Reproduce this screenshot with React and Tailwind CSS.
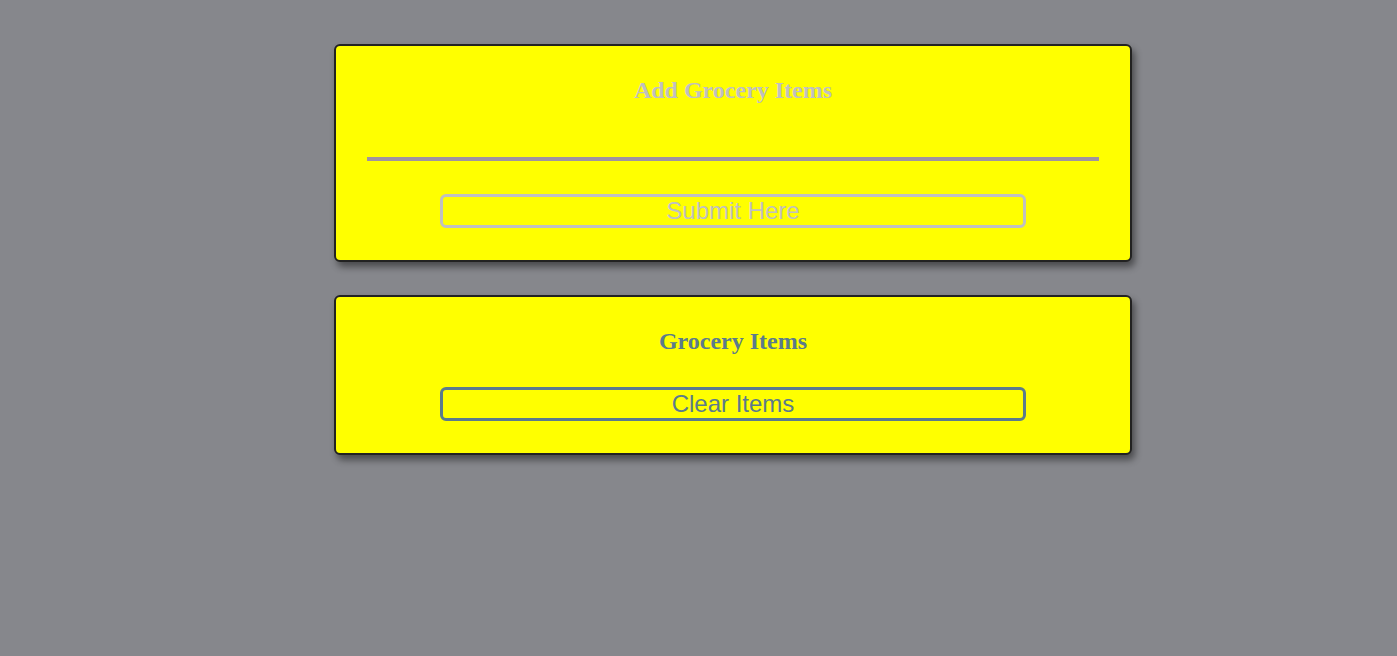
export default function App() {
  return (
    <div className="min-h-[656px] w-full bg-[#86878c] pt-[44px]">
      <div className="ml-[334px] flex w-[798px] flex-col gap-[33px]">
        <div className="flex flex-col items-center rounded-[6px] border-2 border-[#222222] bg-[#ffff00] pt-[30px] pb-[32px] shadow-[3px_5px_7px_rgba(0,0,0,0.45)]">
          <h2 className="h-[28px] text-[24px] font-bold leading-[28px] text-[#c0c0c0] [font-family:'Liberation_Serif',serif]">
            Add Grocery Items
          </h2>
          <input
            type="text"
            className="h-[57px] w-[732px] border-0 border-b-4 border-[#a0939f] bg-transparent outline-none"
          />
          <button className="mt-[33px] h-[34px] w-[586px] rounded-[6px] border-[3px] border-[#c0c0c0] bg-transparent text-[24px] leading-[26px] text-[#c0c0c0] [font-family:'Liberation_Sans',Arial,sans-serif]">
            Submit Here
          </button>
        </div>
        <div className="flex flex-col items-center rounded-[6px] border-2 border-[#222222] bg-[#ffff00] pt-[30px] pb-[32px] shadow-[3px_5px_7px_rgba(0,0,0,0.45)]">
          <h2 className="h-[28px] text-[24px] font-bold leading-[28px] text-[#5b7b8c] [font-family:'Liberation_Serif',serif]">
            Grocery Items
          </h2>
          <button className="mt-[32px] h-[34px] w-[586px] rounded-[6px] border-[3px] border-[#5b7b8c] bg-transparent text-[24px] leading-[26px] text-[#5b7b8c] [font-family:'Liberation_Sans',Arial,sans-serif]">
            Clear Items
          </button>
        </div>
      </div>
    </div>
  );
}
